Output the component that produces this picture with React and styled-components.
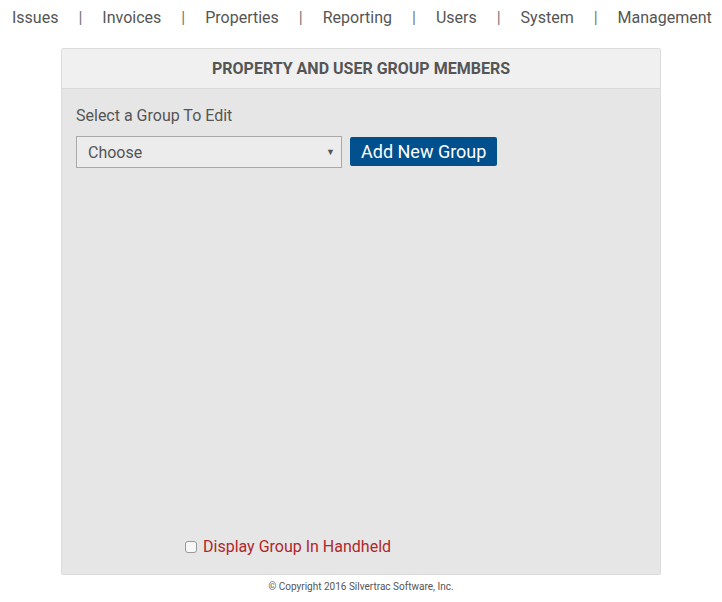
import styled, { createGlobalStyle } from 'styled-components'

const GlobalStyle = createGlobalStyle`
    body {
        margin: 0;
        background: #fff;
        font-family: Roboto, "Liberation Sans", sans-serif;
        color: #555;
    }
`

const Nav = styled.nav`
    display: flex;
    align-items: center;
    height: 34px;
    padding-left: 12px;
    font-size: 16px;
    color: #555;
    white-space: nowrap;
`

const NavItem = styled.a`
    color: #555;
    text-decoration: none;
`

const Sep = styled.span`
    margin: 0 20px;
    color: #777;
`

const Panel = styled.div`
    box-sizing: border-box;
    width: 600px;
    margin: 14px auto 0;
    border: 1px solid #dcdcdc;
    border-radius: 2px;
    background: #e6e6e6;
`

const PanelHeader = styled.div`
    height: 39px;
    display: flex;
    align-items: center;
    justify-content: center;
    background: #f0f0f0;
    border-bottom: 1px solid #dadada;
    font-size: 16px;
    font-weight: 700;
    text-transform: uppercase;
    color: #555;
`

const PanelBody = styled.div`
    box-sizing: border-box;
    height: 485px;
    display: flex;
    flex-direction: column;
    padding: 17px 14px 18px;
`

const Label = styled.div`
    font-size: 16px;
    line-height: 19px;
    color: #555;
`

const Row = styled.div`
    display: flex;
    align-items: flex-start;
    gap: 8px;
    margin-top: 11px;
`

const SelectBox = styled.div`
    box-sizing: border-box;
    width: 266px;
    height: 32px;
    display: flex;
    align-items: center;
    justify-content: space-between;
    padding: 0 6px 0 11px;
    background: #ececec;
    border: 1px solid #a9a9a9;
    font-size: 16px;
    color: #555;
`

const Arrow = styled.span`
    font-size: 9px;
    color: #555;
`

const Button = styled.button`
    height: 29px;
    margin-top: 1px;
    padding: 0 11px;
    border: none;
    border-radius: 2px;
    background: #00508e;
    color: #fff;
    font-family: Roboto, "Liberation Sans", sans-serif;
    font-size: 18px;
    cursor: pointer;
`

const CheckRow = styled.label`
    margin-top: auto;
    display: flex;
    align-items: center;
    gap: 6px;
    padding-left: 109px;
    font-size: 16px;
    color: #b0262a;
`

const Box = styled.span`
    box-sizing: border-box;
    width: 12px;
    height: 12px;
    border: 1px solid #999;
    border-radius: 3px;
    background: #f7f7f7;
`

const Footer = styled.div`
    text-align: center;
    font-size: 10px;
    color: #555;
    margin-top: 6px;
`

const links = ['Issues', 'Invoices', 'Properties', 'Reporting', 'Users', 'System', 'Management']

const App = () => {
    return (
        <>
            <GlobalStyle />
            <Nav>
                {links.map((l, i) => (
                    <span key={l}>
                        {i > 0 && <Sep>|</Sep>}
                        <NavItem href="#">{l}</NavItem>
                    </span>
                ))}
            </Nav>
            <Panel>
                <PanelHeader>Property and User Group Members</PanelHeader>
                <PanelBody>
                    <Label>Select a Group To Edit</Label>
                    <Row>
                        <SelectBox>
                            Choose
                            <Arrow>▼</Arrow>
                        </SelectBox>
                        <Button>Add New Group</Button>
                    </Row>
                    <CheckRow>
                        <Box />
                        Display Group In Handheld
                    </CheckRow>
                </PanelBody>
            </Panel>
            <Footer>© Copyright 2016 Silvertrac Software, Inc.</Footer>
        </>
    )
}

export default App
